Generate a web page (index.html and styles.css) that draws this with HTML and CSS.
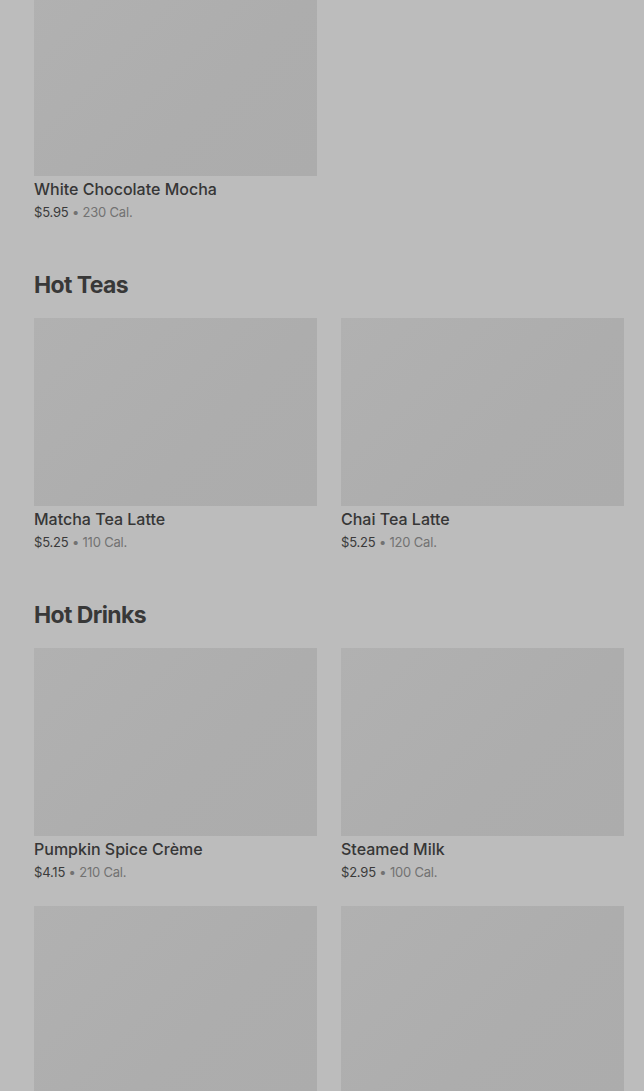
FILE: index.html
```html
<!DOCTYPE html>
<html>
<head>
<link rel="stylesheet" href="styles.css">
</head>
<body>
<div class="menu">

 <section class="section first">
  <div class="grid">
   <div class="item">
    <div class="photo"></div>
    <div class="name">White Chocolate Mocha</div>
    <div class="meta"><span class="price">$5.95</span> • 230 Cal.</div>
   </div>
  </div>
 </section>

 <section class="section">
  <h2 class="title">Hot Teas</h2>
  <div class="grid">
   <div class="item">
    <div class="photo"></div>
    <div class="name">Matcha Tea Latte</div>
    <div class="meta"><span class="price">$5.25</span> • 110 Cal.</div>
   </div>
   <div class="item">
    <div class="photo"></div>
    <div class="name">Chai Tea Latte</div>
    <div class="meta"><span class="price">$5.25</span> • 120 Cal.</div>
   </div>
  </div>
 </section>

 <section class="section">
  <h2 class="title">Hot Drinks</h2>
  <div class="grid">
   <div class="item">
    <div class="photo"></div>
    <div class="name">Pumpkin Spice Crème</div>
    <div class="meta"><span class="price">$4.15</span> • 210 Cal.</div>
   </div>
   <div class="item">
    <div class="photo"></div>
    <div class="name">Steamed Milk</div>
    <div class="meta"><span class="price">$2.95</span> • 100 Cal.</div>
   </div>
   <div class="item">
    <div class="photo"></div>
   </div>
   <div class="item">
    <div class="photo"></div>
   </div>
  </div>
 </section>

</div>
</body>
</html>
```

FILE: styles.css
```css
html, body{
   margin:0;
   padding:0;
   background:#bcbcbc;
   overflow:hidden;
}

.menu{
   padding:0 20px 0 34px;
   margin-top:-12px;
   font-family:Inter, "Liberation Sans", sans-serif;
   color:#333333;
}

.section{
   padding-top:47px;
}

.section.first{
   padding-top:0;
}

.title{
   margin:0 0 17px 0;
   font-size:23px;
   line-height:32px;
   font-weight:700;
   letter-spacing:-0.6px;
   color:#383838;
}

.grid{
   display:grid;
   grid-template-columns:283px 283px;
   column-gap:24px;
   row-gap:24px;
}

.photo{
   height:188px;
   background:linear-gradient(135deg, #b1b1b1 0%, #adadad 60%, #acacac 100%);
}

.name{
   padding-top:2px;
   font-size:16px;
   line-height:22px;
   font-weight:500;
   letter-spacing:0;
   color:#363636;
}

.meta{
   margin-top:2px;
   font-size:13px;
   line-height:20px;
   color:#727272;
   letter-spacing:-0.2px;
}

.price{
   color:#3a3a3a;
}
```
